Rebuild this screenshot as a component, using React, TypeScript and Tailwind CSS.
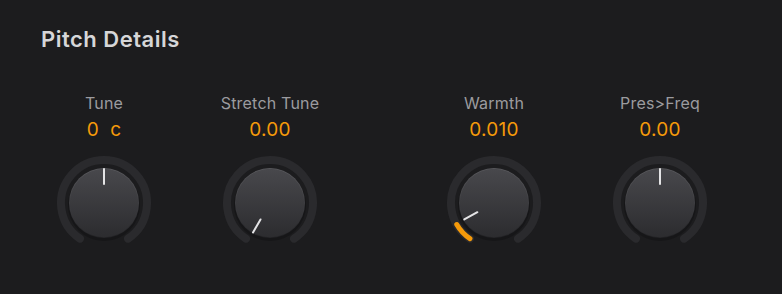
import React from 'react';

type KnobSpec = {
  label: string;
  value: string;
  angle: number; // pointer angle in degrees, 0 = up
  fillTo?: number; // end angle of the orange value arc
};

const MIN = -146;
const MAX = 146;

const pt = (r: number, deg: number) => {
  const a = (deg * Math.PI) / 180;
  return { x: 50 + r * Math.sin(a), y: 50 - r * Math.cos(a) };
};

const arc = (r: number, from: number, to: number) => {
  const s = pt(r, from);
  const e = pt(r, to);
  const large = to - from > 180 ? 1 : 0;
  return `M ${s.x} ${s.y} A ${r} ${r} 0 ${large} 1 ${e.x} ${e.y}`;
};

const Knob: React.FC<{ spec: KnobSpec; id: number }> = ({ spec, id }) => {
  const t1 = pt(34, spec.angle);
  const t2 = pt(19, spec.angle);
  return (
    <svg width="100" height="100" viewBox="0 0 100 100" className="block">
      <defs>
        <linearGradient id={`body${id}`} x1="0" y1="0" x2="0" y2="1">
          <stop offset="0%" stopColor="#48484c" />
          <stop offset="100%" stopColor="#2c2c2f" />
        </linearGradient>
        <linearGradient id={`edge${id}`} x1="0" y1="0" x2="0" y2="1">
          <stop offset="0%" stopColor="#5a5a5e" />
          <stop offset="100%" stopColor="#232326" />
        </linearGradient>
      </defs>
      <path d={arc(43, MIN, MAX)} fill="none" stroke="#2a2a2d" strokeWidth="8" strokeLinecap="round" />
      {spec.fillTo !== undefined && (
        <path d={arc(43, MIN, spec.fillTo)} fill="none" stroke="#f59a0a" strokeWidth="5" strokeLinecap="round" />
      )}
      <circle cx="50" cy="52" r="36" fill="#121214" opacity="0.6" />
      <circle cx="50" cy="50" r="35" fill={`url(#edge${id})`} />
      <circle cx="50" cy="50" r="34.2" fill={`url(#body${id})`} />
      <line x1={t1.x} y1={t1.y} x2={t2.x} y2={t2.y} stroke="#e4e4e6" strokeWidth="2" strokeLinecap="round" />
    </svg>
  );
};

const Column: React.FC<{ spec: KnobSpec; id: number }> = ({ spec, id }) => (
  <div className="flex w-[120px] flex-col items-center">
    <div className="h-5 text-[16px] leading-5 tracking-[0.2px] text-[#9b9b9f] whitespace-nowrap">{spec.label}</div>
    <div className="mt-[5px] h-6 text-[19px] leading-6 tracking-[0.3px] text-[#f59a0a] whitespace-pre">{spec.value}</div>
    <div className="mt-[11px]">
      <Knob spec={spec} id={id} />
    </div>
  </div>
);

const left: KnobSpec[] = [
  { label: 'Tune', value: '0  c', angle: 0 },
  { label: 'Stretch Tune', value: '0.00', angle: -150 },
];

const right: KnobSpec[] = [
  { label: 'Warmth', value: '0.010', angle: -119, fillTo: -120 },
  { label: 'Pres>Freq', value: '0.00', angle: 0 },
];

export default function App() {
  return (
    <div
      className="h-[294px] w-[782px] overflow-hidden bg-[#1c1c1e]"
      style={{ fontFamily: 'Inter, "Liberation Sans", sans-serif' }}
    >
      <div className="pl-[41px] pt-[25px] text-[22px] font-semibold leading-7 tracking-[0.5px] text-[#d6d6d8]">
        Pitch Details
      </div>
      <div className="mt-[40px] flex pl-[44px]">
        <div className="flex gap-[46px]">
          {left.map((s, i) => (
            <Column key={s.label} spec={s} id={i} />
          ))}
        </div>
        <div className="ml-[104px] flex gap-[46px]">
          {right.map((s, i) => (
            <Column key={s.label} spec={s} id={i + 2} />
          ))}
        </div>
      </div>
    </div>
  );
}
